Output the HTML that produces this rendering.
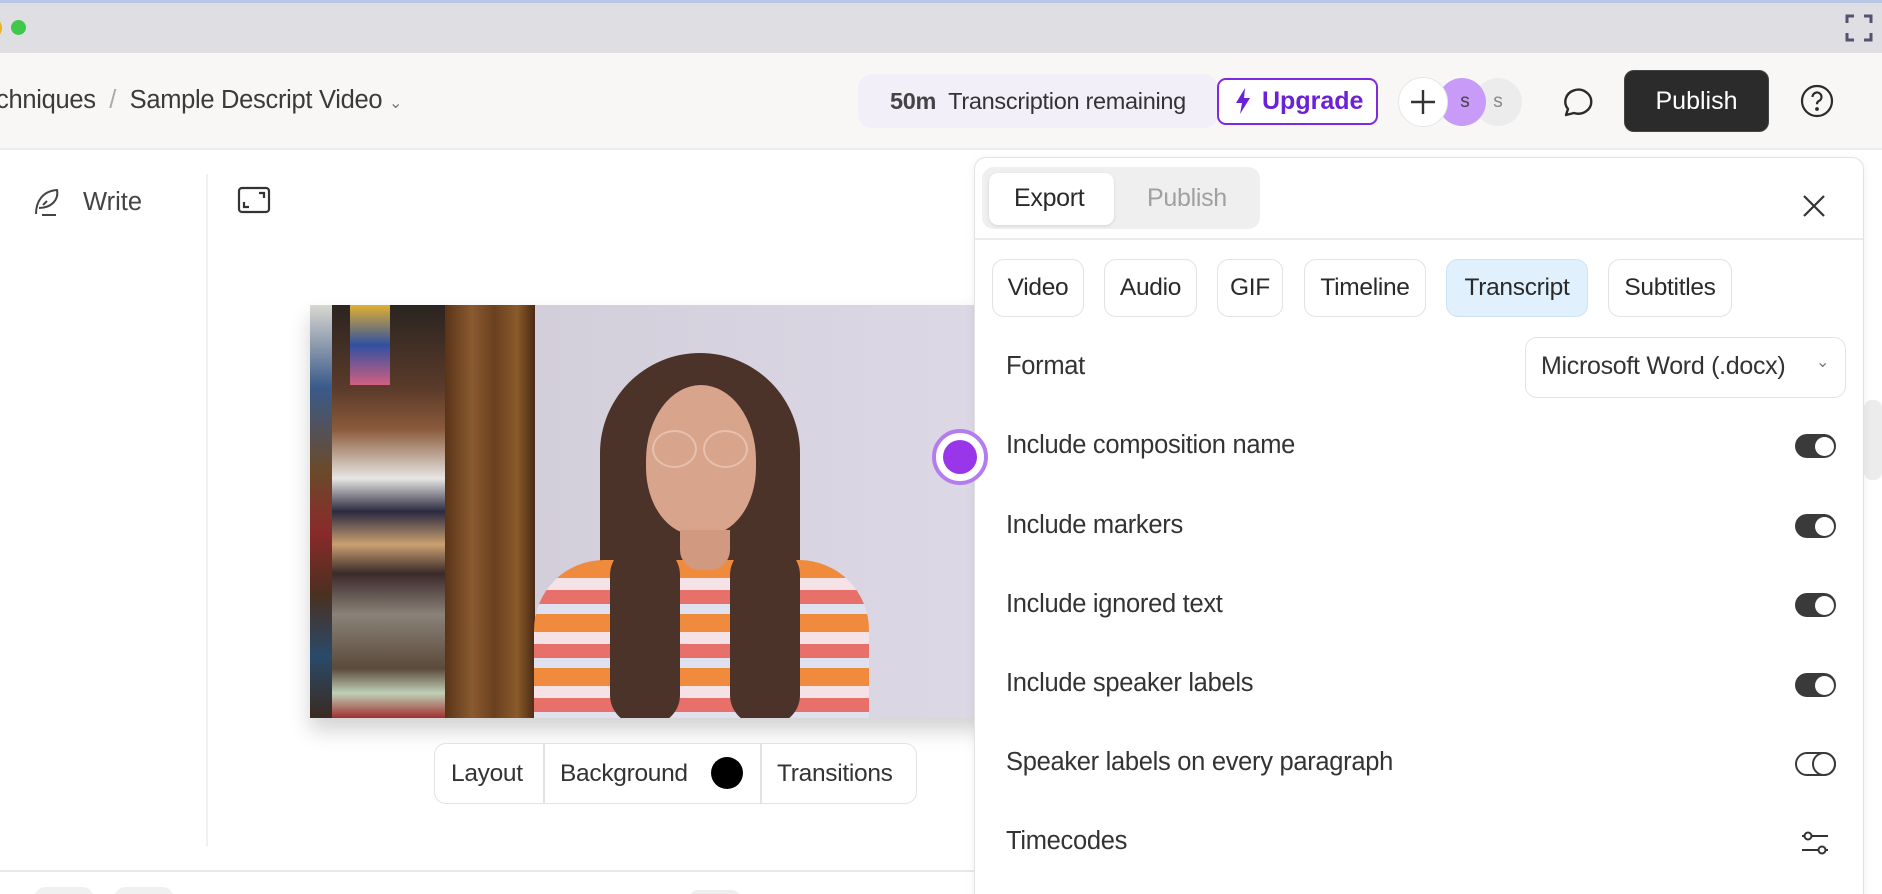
<!DOCTYPE html>
<html style="width:1882px;height:894px;overflow:hidden"><head><meta charset="utf-8">
<style>
*{box-sizing:border-box;margin:0;padding:0}
body{width:1882px;height:894px;overflow:hidden;background:#fff;font-family:"Liberation Sans",sans-serif;color:#2b2b2b;position:relative}
.a{position:absolute}
.t{position:absolute;white-space:nowrap}
.chip{position:absolute;top:259px;height:58px;border:1.5px solid #e3e3e3;border-radius:12px;font-size:24.5px;display:flex;align-items:center;justify-content:center;color:#2a2a2a;letter-spacing:-0.3px}
.row{position:absolute;left:1006px;font-size:25.5px;color:#333;white-space:nowrap;letter-spacing:-0.3px}
.tog{position:absolute;left:1795px;width:41px;height:24px;border-radius:12px;background:#3a3a3a}
.tog::after{content:"";position:absolute;right:2.5px;top:2.5px;width:19px;height:19px;border-radius:50%;background:#fff}
</style></head><body>
<!-- top chrome -->
<div class="a" style="left:0;top:0;width:1882px;height:3px;background:#b9c6e4"></div>
<div class="a" style="left:0;top:3px;width:1882px;height:50px;background:#dfdfe3"></div>
<div class="a" style="left:-6px;top:21px;width:8px;height:14px;border-radius:50%;background:#e7b321"></div>
<div class="a" style="left:11px;top:20px;width:15px;height:15px;border-radius:50%;background:#3fc84a"></div>
<svg class="a" style="left:1845px;top:14px" width="28" height="28" viewBox="0 0 28 28" fill="none" stroke="#555170" stroke-width="3"><path d="M2 9V2h7M19 2h7v7M26 19v7h-7M9 26H2v-7"/></svg>
<!-- header -->
<div class="a" style="left:0;top:53px;width:1882px;height:97px;background:#f8f7f5;border-bottom:2px solid #ececec"></div>
<div class="t" style="left:-4px;top:86px;font-size:25.5px;color:#3a3a3a;letter-spacing:-0.3px">chniques &nbsp;<span style="color:#aaa">/</span>&nbsp; Sample Descript Video <span style="font-size:16px;color:#777">&#8964;</span></div>
<div class="a" style="left:858px;top:74px;width:360px;height:54px;border-radius:14px;background:#f3eff9"></div>
<div class="t" style="left:890px;top:88px;font-size:23.5px;color:#333;letter-spacing:-0.3px"><b style="color:#444">50m</b>&nbsp; Transcription remaining</div>
<div class="a" style="left:1217px;top:78px;width:161px;height:47px;border:2.5px solid #7c2be0;border-radius:9px;background:#fff"></div>
<svg class="a" style="left:1235px;top:88px" width="16" height="26" viewBox="0 0 16 26"><path d="M10 0L1 15h6l-2 11 10-16H9z" fill="#6b21d8"/></svg>
<div class="t" style="left:1262px;top:87px;font-size:25px;font-weight:bold;color:#6b21d8">Upgrade</div>
<div class="a" style="left:1474px;top:78px;width:48px;height:48px;border-radius:50%;background:#ececec;color:#888;font-size:19px;text-align:center;line-height:48px">s</div>
<div class="a" style="left:1438px;top:78px;width:48px;height:48px;border-radius:50%;background:#c79bf7;color:#444;font-size:19px;text-align:center;line-height:48px;padding-left:6px">s</div>
<div class="a" style="left:1398px;top:77px;width:50px;height:50px;border-radius:50%;background:#fff;border:1.5px solid #e6e6e6"></div>
<svg class="a" style="left:1410px;top:89px" width="26" height="26" viewBox="0 0 26 26" stroke="#333" stroke-width="2.4"><path d="M13 1v24M1 13h24"/></svg>
<svg class="a" style="left:1559px;top:86px" width="34" height="32" viewBox="0 0 34 32" fill="none" stroke="#2b2b2b" stroke-width="2.4"><path d="M7 29l2-6A13 12 0 1 1 15 27z" stroke-linejoin="round"/></svg>
<div class="a" style="left:1624px;top:70px;width:145px;height:62px;border-radius:10px;background:#2b2b2b;border:1px solid #444;color:#fff;font-size:25px;text-align:center;line-height:60px">Publish</div>
<svg class="a" style="left:1800px;top:84px" width="34" height="34" viewBox="0 0 34 34" fill="none" stroke="#2b2b2b" stroke-width="2.2"><circle cx="17" cy="17" r="15"/><path d="M12.5 13a4.5 4.5 0 1 1 6 4.2c-1.3.6-1.5 1.5-1.5 3"/><circle cx="17" cy="25" r="0.8" fill="#2b2b2b"/></svg>
<!-- left tools -->
<svg class="a" style="left:33px;top:186px" width="32" height="32" viewBox="0 0 32 32" fill="none" stroke="#444" stroke-width="2"><path d="M3 28C3 15 10 5 24 4 26 14 18 22 6 22M14 15l-4 4M9 29h14"/></svg>
<div class="t" style="left:83px;top:188px;font-size:25.5px;color:#444">Write</div>
<div class="a" style="left:206px;top:174px;width:2px;height:672px;background:#f0f0f0"></div>
<svg class="a" style="left:237px;top:186px" width="34" height="28" viewBox="0 0 34 28" fill="none" stroke="#333" stroke-width="2.2"><rect x="2" y="2" width="30" height="24" rx="3"/><path d="M7 16v5h5M27 12V7h-5"/></svg>
<!-- video -->
<div class="a" style="left:310px;top:305px;width:680px;height:413px;overflow:hidden;background:#d7d3e3;box-shadow:0 12px 20px rgba(0,0,0,.18)">
 <div class="a" style="left:0;top:0;width:135px;height:413px;background:linear-gradient(180deg,#2a2420,#5a3a2a 20%,#8a5a3a 30%,#e8e6e4 42%,#2a2a40 50%,#caa070 58%,#3a2a2a 65%,#8a8278 75%,#5a4a3a 88%,#c0d0b8 94%,#a03030)"></div>
 <div class="a" style="left:0;top:0;width:22px;height:413px;background:linear-gradient(180deg,#d8d8d0,#3a5a8a 20%,#6a4a2a 40%,#8a2a2a 55%,#4a3020 70%,#2a4a6a 85%,#3a2a20)"></div>
 <div class="a" style="left:40px;top:0;width:40px;height:80px;background:linear-gradient(180deg,#e0b030,#3050a0 50%,#d06080)"></div>
 <div class="a" style="left:135px;top:0;width:90px;height:413px;background:linear-gradient(90deg,#5a3418,#8a5a30 30%,#6a4020 55%,#8a5a2a 80%,#4a2a14)"></div>
 <div class="a" style="left:225px;top:0;width:455px;height:413px;background:linear-gradient(90deg,#d2ceda,#dcd8e6)"></div>
 <div class="a" style="left:290px;top:48px;width:200px;height:370px;border-radius:100px 100px 30px 30px;background:#4b3329"></div>
 <div class="a" style="left:336px;top:80px;width:110px;height:150px;border-radius:50% 50% 45% 45%;background:#d8a48b"></div>
 <div class="a" style="left:342px;top:125px;width:45px;height:38px;border:2px solid #e7c0b0;border-radius:50%"></div>
 <div class="a" style="left:393px;top:125px;width:45px;height:38px;border:2px solid #e7c0b0;border-radius:50%"></div>
 <div class="a" style="left:224px;top:255px;width:335px;height:170px;border-radius:70px 70px 0 0;background:repeating-linear-gradient(180deg,#f08a3c 0 18px,#f4e2e6 18px 30px,#e8706a 30px 44px,#dfe2ee 44px 54px)"></div>
 <div class="a" style="left:300px;top:240px;width:70px;height:180px;border-radius:30px;background:#4b3329"></div>
 <div class="a" style="left:420px;top:240px;width:70px;height:180px;border-radius:30px;background:#4b3329"></div>
 <div class="a" style="left:370px;top:225px;width:50px;height:40px;background:#d19a80;border-radius:0 0 20px 20px"></div>
</div>
<!-- layout bar -->
<div class="a" style="left:434px;top:743px;width:483px;height:61px;border:1.5px solid #e3e3e3;border-radius:12px;background:#fff"></div>
<div class="a" style="left:543px;top:744px;width:1.5px;height:59px;background:#e3e3e3"></div>
<div class="a" style="left:760px;top:744px;width:1.5px;height:59px;background:#e3e3e3"></div>
<div class="t" style="left:451px;top:760px;font-size:24.5px;color:#333;letter-spacing:-0.3px">Layout</div>
<div class="t" style="left:560px;top:760px;font-size:24.5px;color:#333;letter-spacing:-0.3px">Background</div>
<div class="a" style="left:711px;top:757px;width:32px;height:32px;border-radius:50%;background:#000"></div>
<div class="t" style="left:777px;top:760px;font-size:24.5px;color:#333;letter-spacing:-0.3px">Transitions</div>
<!-- bottom -->
<div class="a" style="left:0;top:870px;width:980px;height:2px;background:#e8e8e8"></div>
<div class="a" style="left:35px;top:887px;width:58px;height:20px;border-radius:10px;background:#f0f0f0"></div>
<div class="a" style="left:115px;top:887px;width:58px;height:20px;border-radius:10px;background:#f0f0f0"></div>
<div class="a" style="left:690px;top:890px;width:50px;height:20px;border-radius:8px;background:#eee"></div>
<div class="a" style="left:1864px;top:400px;width:18px;height:80px;border-radius:8px;background:#ececec"></div>
<!-- panel -->
<div class="a" style="left:974px;top:157px;width:890px;height:760px;background:#fff;border:1.5px solid #e2e2e2;border-radius:12px;box-shadow:0 2px 10px rgba(0,0,0,.06)"></div>
<div class="a" style="left:982px;top:167px;width:278px;height:62px;border-radius:12px;background:#efefef"></div>
<div class="a" style="left:989px;top:173px;width:125px;height:52px;border-radius:9px;background:#fff;box-shadow:0 1px 3px rgba(0,0,0,.12)"></div>
<div class="t" style="left:1014px;top:184px;font-size:25px;color:#2a2a2a;letter-spacing:-0.3px">Export</div>
<div class="t" style="left:1147px;top:184px;font-size:25px;color:#a0a0a0;letter-spacing:-0.3px">Publish</div>
<svg class="a" style="left:1802px;top:194px" width="24" height="24" viewBox="0 0 24 24" stroke="#333" stroke-width="2.2"><path d="M2 2l20 20M22 2L2 22"/></svg>
<div class="a" style="left:975px;top:238px;width:888px;height:2px;background:#ececec"></div>
<div class="chip" style="left:992px;width:92px">Video</div>
<div class="chip" style="left:1104px;width:93px">Audio</div>
<div class="chip" style="left:1217px;width:66px">GIF</div>
<div class="chip" style="left:1304px;width:122px">Timeline</div>
<div class="chip" style="left:1446px;width:142px;background:#e0f0fd;border-color:#cde3f5">Transcript</div>
<div class="chip" style="left:1608px;width:124px">Subtitles</div>
<div class="row" style="top:352px">Format</div>
<div class="a" style="left:1525px;top:337px;width:321px;height:61px;border:1.5px solid #e3e3e3;border-radius:12px"></div>
<div class="t" style="left:1541px;top:352px;font-size:25px;color:#333;letter-spacing:-0.3px">Microsoft Word (.docx)</div>
<div class="t" style="left:1816px;top:352px;font-size:16px;color:#777">&#8964;</div>
<div class="row" style="top:431px">Include composition name</div><div class="tog" style="top:434px"></div>
<div class="row" style="top:511px">Include markers</div><div class="tog" style="top:514px"></div>
<div class="row" style="top:590px">Include ignored text</div><div class="tog" style="top:593px"></div>
<div class="row" style="top:669px">Include speaker labels</div><div class="tog" style="top:673px"></div>
<div class="row" style="top:748px">Speaker labels on every paragraph</div>
<div class="a" style="left:1795px;top:752px;width:41px;height:24px;border-radius:12px;border:2px solid #3a3a3a"></div>
<div class="a" style="left:1812px;top:752px;width:24px;height:24px;border-radius:50%;border:2px solid #3a3a3a"></div>
<div class="row" style="top:827px">Timecodes</div>
<svg class="a" style="left:1800px;top:828px" width="30" height="30" viewBox="0 0 30 30" fill="none" stroke="#333" stroke-width="2"><path d="M12 8h16M2 22h16"/><circle cx="8" cy="8" r="3.5"/><circle cx="22" cy="22" r="3.5"/><path d="M2 8h2.5M25.5 22h2.5"/></svg>
<!-- purple dot (on top of panel) -->
<div class="a" style="left:932px;top:429px;width:56px;height:56px;border-radius:50%;background:#fff;border:4px solid #b57cf0"></div>
<div class="a" style="left:943px;top:440px;width:34px;height:34px;border-radius:50%;background:#9a36ea"></div>
</body></html>
